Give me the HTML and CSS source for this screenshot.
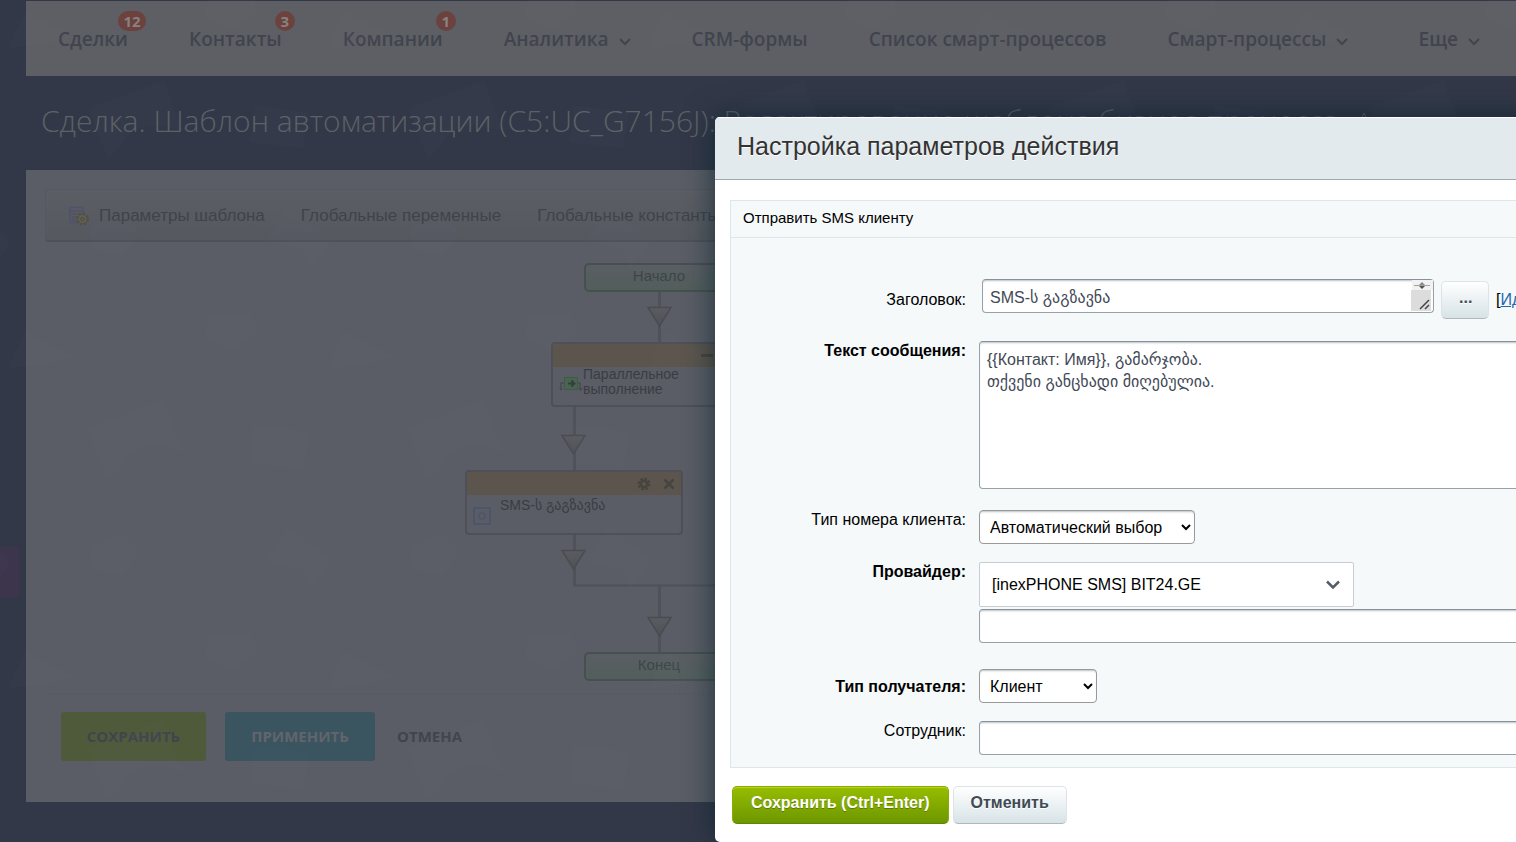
FILE: index.html
```html
<!DOCTYPE html>
<html lang="ru">
<head>
  <meta charset="utf-8">
  <title>Сделка. Шаблон автоматизации</title>
  <link rel="stylesheet" href="styles.css">
</head>
<body>
  <div class="side-marker"></div>

  <div class="page">
    <nav class="top-menu">
      <a class="menu-item" href="#">Сделки<span class="badge badge-wide">12</span></a>
      <a class="menu-item" href="#">Контакты<span class="badge">3</span></a>
      <a class="menu-item" href="#">Компании<span class="badge">1</span></a>
      <a class="menu-item" href="#">Аналитика<svg class="chevron" viewBox="0 0 12 8"><path d="M1 1l5 5 5-5"/></svg></a>
      <a class="menu-item" href="#">CRM-формы</a>
      <a class="menu-item" href="#">Список смарт-процессов</a>
      <a class="menu-item" href="#">Смарт-процессы<svg class="chevron" viewBox="0 0 12 8"><path d="M1 1l5 5 5-5"/></svg></a>
      <a class="menu-item menu-more" href="#">Еще<svg class="chevron" viewBox="0 0 12 8"><path d="M1 1l5 5 5-5"/></svg></a>
    </nav>

    <h1 class="page-title">
      Сделка. Шаблон автоматизации (C5:UC_G7156J): Редактирование шаблона бизнес-процесса
      <svg class="star" viewBox="0 0 20 20"><path d="M10 1l2.600 6 6.400.500-5 4.200 1.600 6.300-5.600-3.500-5.600 3.500L6 11.700 1 7.500 7.400 7z"/></svg>
    </h1>

    <main class="workarea">
      <div class="toolbar">
        <a class="toolbar-link" href="#">
          <svg class="toolbar-icon" viewBox="0 0 22 20">
            <path d="M2 1.500h13v15H2zM2 5h13M4 8h8M4 11h6M4 14h4" fill="none" stroke="#50516a" stroke-width="1.500"/>
            <circle cx="14.500" cy="13" r="5" fill="#5d5d50" stroke="#535141" stroke-width="3" stroke-dasharray="2.200 1.700"/>
            <circle cx="14.500" cy="13" r="4.500" fill="#626151" stroke="#535141"/>
            <circle cx="14.500" cy="13" r="1.800" fill="#5b5d62" stroke="#4d4d45"/>
          </svg>
          Параметры шаблона
        </a>
        <a class="toolbar-link" href="#">Глобальные переменные</a>
        <a class="toolbar-link" href="#">Глобальные константы</a>
      </div>

      <!-- Workflow diagram -->
      <div class="diagram">
        <svg class="wires" viewBox="0 0 800 452">
          <defs>
            <linearGradient id="arrowFill" x1="0" y1="0" x2="0" y2="1">
              <stop offset="0" stop-color="#5b5c61"/>
              <stop offset="1" stop-color="#505157"/>
            </linearGradient>
          </defs>
          <path class="wire" d="M614.500 50V101M529.500 165V228M529.500 292V343.500M614.500 343V411"/>
          <path class="wire wire-thin" d="M528 343.500H800"/>
          <path class="arrow" d="M603 65.500h23l-11.500 18.500z"/>
          <path class="arrow" d="M517 193.500h23l-11.500 18.500z"/>
          <path class="arrow" d="M517 308.500h23l-11.500 18.500z"/>
          <path class="arrow" d="M603 375.500h23l-11.500 18.500z"/>
        </svg>

        <div class="node-end node-start-pos">Начало</div>

        <div class="node node-parallel-pos">
          <div class="node-head"><span class="node-minus"></span></div>
          <div class="node-body node-body-parallel">
            <svg class="node-icon" width="24" height="18" viewBox="0 0 24 18">
              <path d="M6 7H2v7M18 7h3v7" fill="none" stroke="#4a4b51" stroke-width="1.500"/>
              <path d="M0 12h4l-2 3zM19 12h5l-2.500 3z" fill="#4a4b51"/>
              <rect x="5.500" y="1.500" width="13" height="12" fill="#496450" stroke="#3f5b47"/>
              <path d="M9 7.500h6M12.500 4.500l3 3-3 3" fill="none" stroke="#343f3b" stroke-width="1.800"/>
            </svg>
            <span>Параллельное выполнение</span>
          </div>
        </div>

        <div class="node node-sms-pos">
          <div class="node-head">
            <svg width="14" height="14" viewBox="0 0 14 14">
              <circle cx="7" cy="7" r="5" fill="none" stroke="#47443f" stroke-width="3" stroke-dasharray="2.300 1.600"/>
              <circle cx="7" cy="7" r="3.200" fill="none" stroke="#47443f" stroke-width="2.500"/>
            </svg>
            <svg width="12" height="12" viewBox="0 0 12 12"><path d="M1.500 1.500l9 9M10.500 1.500l-9 9" stroke="#47443f" stroke-width="2.500"/></svg>
          </div>
          <div class="node-body node-body-sms">
            <svg class="node-icon" width="18" height="18" viewBox="0 0 18 18">
              <rect x="1" y="1" width="16" height="16" fill="none" stroke="#48546e" stroke-width="1.500"/>
              <circle cx="9" cy="9" r="3" fill="none" stroke="#4e556b" stroke-width="1.500"/>
            </svg>
            <span>SMS-ს გაგზავნა</span>
          </div>
        </div>

        <div class="node-end node-finish-pos">Конец</div>
      </div>

      <div class="page-buttons">
        <button class="page-button button-save" type="button">Сохранить</button>
        <button class="page-button button-apply" type="button">Применить</button>
        <button class="page-button button-cancel" type="button">Отмена</button>
      </div>
    </main>
  </div>

  <!-- Faint paper pattern over the dimmed page -->
  <svg class="pattern" width="100%" height="100%">
    <defs>
      <pattern id="papers" width="320" height="320" patternUnits="userSpaceOnUse">
        <path d="M89 109L163 81 182 130 160 125Q128 125 122 145L108 158z"/>
        <path d="M255 106l53 7-5 35-53-6z"/>
        <path d="M90 227l35-12 13 20-18 20-28-8z"/>
        <path d="M267 240l21-30 32 22v17l-10 20-7-20z"/>
        <path d="M0 232l10 8-10 17z"/>
        <path d="M209 315h43v5h-43z"/>
        <path d="M209 0h44l4 13-27 17-25-13z"/>
        <path d="M25 13l47 24-35 7-28 4z"/>
      </pattern>
    </defs>
    <rect width="100%" height="100%" fill="url(#papers)"/>
  </svg>

  <div class="dialog" role="dialog" aria-labelledby="dialogTitle">
    <div class="dialog-header">
      <h2 id="dialogTitle" class="dialog-title">Настройка параметров действия</h2>
    </div>

    <form class="dialog-content">
      <div class="settings">
        <div class="settings-head">Отправить SMS клиенту</div>

        <div class="settings-rows">
          <div class="row row-title">
            <label for="title">Заголовок:</label>
            <div class="title-field">
              <div class="title-box">
                <textarea id="title" class="field" rows="1">SMS-ს გაგზავნა</textarea>
                <svg class="resizer" width="22" height="31" viewBox="0 0 22 31">
                  <path fill="#f1f1f1" d="M1 0h21v10H1z"/>
                  <path fill="#dcdcdc" d="M0 10h20v21H0z"/>
                  <path d="M3 5.500h16" stroke="#a3a3a3"/>
                  <path fill="#8a8a8a" d="M8 5l3-3 3 3z"/>
                  <path fill="#505050" d="M8 6h6l-3 3z"/>
                  <path d="M9 29l9-9M14 29l4-4" stroke="#444" stroke-width="1.500"/>
                </svg>
              </div>
              <button class="dialog-button button-dots" type="button">...</button>
              <span class="id-link">[<a href="#">Идентификатор</a>]</span>
            </div>
          </div>

          <div class="row row-area">
            <label for="message" class="required">Текст сообщения:</label>
            <textarea id="message" class="field message">{{Контакт: Имя}}, გამარჯობა.
თქვენი განცხადი მიღებულია.</textarea>
          </div>

          <div class="row">
            <label for="phoneType">Тип номера клиента:</label>
            <div><select id="phoneType" class="field select-phone"><option>Автоматический выбор</option></select></div>
          </div>

          <div class="row row-provider">
            <label for="provider" class="required">Провайдер:</label>
            <div class="provider-fields">
              <div class="provider-box">
                <select id="provider" class="provider"><option>[inexPHONE SMS] BIT24.GE</option></select>
                <svg class="provider-chevron" width="14" height="10" viewBox="0 0 14 10"><path d="M1 1.500l6 6 6-6"/></svg>
              </div>
              <input type="text" class="field" aria-label="Провайдер, значение">
            </div>
          </div>

          <div class="row row-center">
            <label for="recipient" class="required">Тип получателя:</label>
            <div><select id="recipient" class="field select-recipient"><option>Клиент</option></select></div>
          </div>

          <div class="row">
            <label for="employee">Сотрудник:</label>
            <input type="text" id="employee" class="field">
          </div>
        </div>
      </div>

      <div class="dialog-buttons">
        <button class="dialog-button button-green" type="button">Сохранить (Ctrl+Enter)</button>
        <button class="dialog-button" type="button">Отменить</button>
      </div>
    </form>
  </div>
</body>
</html>
```
FILE: styles.css
```css
* {
  box-sizing: border-box;
}

body {
  position: relative;
  min-height: 100vh;
  margin: 0;
  overflow: hidden;
  font-family: "Liberation Sans", Arial, "DejaVu Sans", sans-serif;
  background: #333848;
}

a {
  color: inherit;
  text-decoration: none;
}

.side-marker {
  position: absolute;
  left: 0;
  top: 547px;
  width: 19px;
  height: 50px;
  border-radius: 0 2px 2px 0;
  background: #3d354c;
}

.page {
  margin-left: 26px;
  padding-top: 1px;
}

/* Top menu */
.top-menu {
  display: flex;
  align-items: center;
  gap: 61px;
  height: 75px;
  padding: 0 36px 0 32px;
  background: #5e5f64;
  color: #40444e;
  font-family: "Open Sans", sans-serif;
  font-size: 19px;
  font-weight: 600;
  white-space: nowrap;
}

.menu-item {
  position: relative;
}

.menu-more {
  margin-left: auto;
}

.chevron {
  width: 12px;
  height: 8px;
  margin-left: 10px;
  fill: none;
  stroke: #40444e;
  stroke-width: 2;
}

.badge {
  position: absolute;
  top: -15px;
  right: -13px;
  min-width: 20px;
  height: 20px;
  border-radius: 10px;
  background: #6b423e;
  color: #8a8080;
  font-size: 15px;
  font-weight: 700;
  line-height: 20px;
  text-align: center;
}

.badge-wide {
  right: -18px;
  min-width: 28px;
}

.page-title {
  height: 94px;
  margin: 0;
  padding-left: 15px;
  color: #5d6166;
  font-family: "Open Sans", sans-serif;
  font-size: 30px;
  font-weight: 300;
  line-height: 90px;
  white-space: nowrap;
}

.star {
  width: 20px;
  height: 20px;
  margin-left: 8px;
  fill: none;
  stroke: #5d6166;
}

/* Work area */
.workarea {
  padding: 19px 0 41px 19px;
  background: #5a5d65;
}

.toolbar {
  display: flex;
  align-items: center;
  gap: 36px;
  height: 53px;
  padding: 2px 0 0 22px;
  border: 1px solid #56585f;
  border-bottom: 2px solid #4f5157;
  border-radius: 4px;
  background: linear-gradient(#5c5e65, #55585f);
  color: #40434b;
  font-size: 17px;
  white-space: nowrap;
}

.toolbar-link {
  display: flex;
  align-items: center;
  gap: 9px;
}

.toolbar-icon {
  width: 22px;
  height: 20px;
}

.diagram {
  position: relative;
  height: 453px;
  border-bottom: 2px dotted #575a62;
}

.wires {
  position: absolute;
  left: 0;
  top: 0;
  width: 800px;
  height: 452px;
}

.wire {
  fill: none;
  stroke: #4f515b;
  stroke-width: 3;
}

.wire-thin {
  stroke-width: 2;
}

.arrow {
  fill: url(#arrowFill);
  stroke: #4a4c52;
  stroke-width: 1.5;
}

.node-end {
  position: absolute;
  left: 539px;
  width: 150px;
  height: 29px;
  border: 2px solid #46514f;
  border-radius: 5px;
  background: linear-gradient(#5a5e64, #525e5c);
  color: #3c4745;
  font-size: 15px;
  line-height: 22px;
  text-align: center;
}

.node-start-pos {
  top: 21px;
}

.node-finish-pos {
  top: 410px;
}

.node {
  position: absolute;
  width: 218px;
  height: 65px;
  border: 2px solid #4e4f57;
  border-radius: 4px;
  background: #5a5d65;
  color: #3a3c43;
  font-size: 14px;
  line-height: 15px;
}

.node-parallel-pos {
  left: 506px;
  top: 100px;
}

.node-sms-pos {
  left: 420px;
  top: 228px;
}

.node-head {
  display: flex;
  align-items: center;
  justify-content: flex-end;
  gap: 12px;
  height: 23px;
  padding-right: 6px;
  background: #5b554d;
}

.node-minus {
  width: 12px;
  height: 3px;
  margin-right: 48px;
  background: #47443f;
}

.node-body {
  display: flex;
  padding-left: 6px;
}

.node-body-parallel {
  padding-right: 80px;
}

.node-body-sms {
  gap: 9px;
  padding-top: 3px;
}

.node-icon {
  flex: none;
  margin-top: 9px;
}

.page-buttons {
  display: flex;
  gap: 19px;
  padding: 17px 0 0 16px;
}

.page-button {
  height: 49px;
  padding: 0 0 2px;
  border: none;
  border-radius: 3px;
  background: none;
  color: #40444d;
  font-family: "Open Sans", sans-serif;
  font-size: 15px;
  font-weight: 700;
  text-transform: uppercase;
}

.button-save {
  width: 145px;
  background: #4f5a3a;
}

.button-apply {
  width: 150px;
  background: #3a5460;
  color: #62656d;
}

.button-cancel {
  padding: 0 3px 2px;
}

.pattern {
  position: absolute;
  left: 0;
  top: 0;
  pointer-events: none;
}

.pattern path {
  fill: #8fa0b5;
  fill-opacity: 0.02;
}

/* Dialog */
.dialog {
  position: absolute;
  left: 715px;
  right: -200px;
  top: 117px;
  bottom: 0;
  border-radius: 5px;
  background: #fff;
  box-shadow: 0 0 30px rgba(5, 33, 44, 0.7);
  overflow: hidden;
}

.dialog-header {
  height: 63px;
  padding-left: 22px;
  border-bottom: 1px solid #a3a8ab;
  background: #e2eaed;
  box-shadow: inset 0 1px 0 #fff;
}

.dialog-title {
  margin: 0;
  color: #333;
  font-size: 25px;
  font-weight: 400;
  line-height: 58px;
  text-shadow: 0 1px 0 #fff;
}

.dialog-content {
  padding: 20px 15px;
}

.settings {
  border: 1px solid #dce7ed;
  background: #f5f9fa;
}

.settings-head {
  height: 37px;
  padding-left: 12px;
  border-bottom: 1px solid #dce7ed;
  font-size: 15px;
  line-height: 34px;
}

.settings-rows {
  display: flex;
  flex-direction: column;
  gap: 18px;
  padding: 41px 12px 12px 0;
  font-size: 16px;
}

.row {
  display: grid;
  grid-template-columns: 235px 1fr;
  gap: 13px;
  align-items: start;
}

.row label {
  line-height: 19px;
  text-align: right;
}

.row .required {
  font-weight: 700;
}

.row-title {
  min-height: 41px;
}

.row-title,
.row-area {
  margin-bottom: 3px;
}

.row-title,
.row-center {
  align-items: center;
}

.row-provider {
  margin-bottom: 8px;
}

.field {
  display: block;
  width: 100%;
  height: 34px;
  padding: 0 7px;
  border: 1px solid #97a1ac;
  border-top-color: #87919c;
  border-radius: 4px;
  background: #fff;
  box-shadow: inset 0 2px 2px -1px rgba(60, 80, 90, 0.35);
  color: #424956;
  font-family: "Liberation Sans", Arial, "DejaVu Sans", sans-serif;
  font-size: 16px;
  line-height: 22px;
  resize: none;
}

select.field {
  padding: 0 6px;
  border-color: #999;
  color: #000;
}

.title-field {
  display: flex;
  align-items: flex-start;
  gap: 7px;
  padding-left: 3px;
}

.title-box {
  position: relative;
  width: 452px;
}

.title-box .field {
  padding-top: 7px;
  overflow: hidden;
}

.resizer {
  position: absolute;
  right: 1px;
  top: 1px;
}

.id-link {
  line-height: 41px;
}

.id-link a {
  color: #2067b0;
  text-decoration: underline;
}

.message {
  height: 148px;
  padding-top: 7px;
}

.select-phone {
  width: 216px;
}

.select-recipient {
  width: 118px;
}

.provider-fields {
  display: flex;
  flex-direction: column;
  gap: 2px;
}

.provider-box {
  position: relative;
  width: 375px;
}

.provider {
  display: block;
  width: 100%;
  height: 45px;
  padding: 0 12px;
  border: 1px solid #c6cdd3;
  border-radius: 2px;
  background: #fff;
  color: #000;
  appearance: none;
  font-family: inherit;
  font-size: 16px;
}

.provider-chevron {
  position: absolute;
  right: 14px;
  top: 18px;
  fill: none;
  stroke: #535c69;
  stroke-width: 2.5;
  pointer-events: none;
}

.dialog-buttons {
  display: flex;
  gap: 4px;
  padding: 18px 2px;
}

.dialog-button {
  height: 38px;
  padding: 0 17px 4px;
  border: 1px solid #dde3e6;
  border-bottom-color: #b0b8bc;
  border-radius: 5px;
  background: linear-gradient(#fff, #d7e3e7);
  color: #3f4b54;
  font-family: inherit;
  font-size: 16px;
  font-weight: 700;
  text-shadow: 0 1px 0 #fff;
}

.button-green {
  padding: 0 18px 4px;
  border-color: #86ad00;
  border-bottom-color: #5f8400;
  background: linear-gradient(#97bd00, #6d9700);
  box-shadow: inset 0 1px 0 #b5d51c;
  color: #fff;
  text-shadow: 0 1px 0 #5c7a00;
}

.button-dots {
  width: 48px;
  margin-top: 2px;
}
```
